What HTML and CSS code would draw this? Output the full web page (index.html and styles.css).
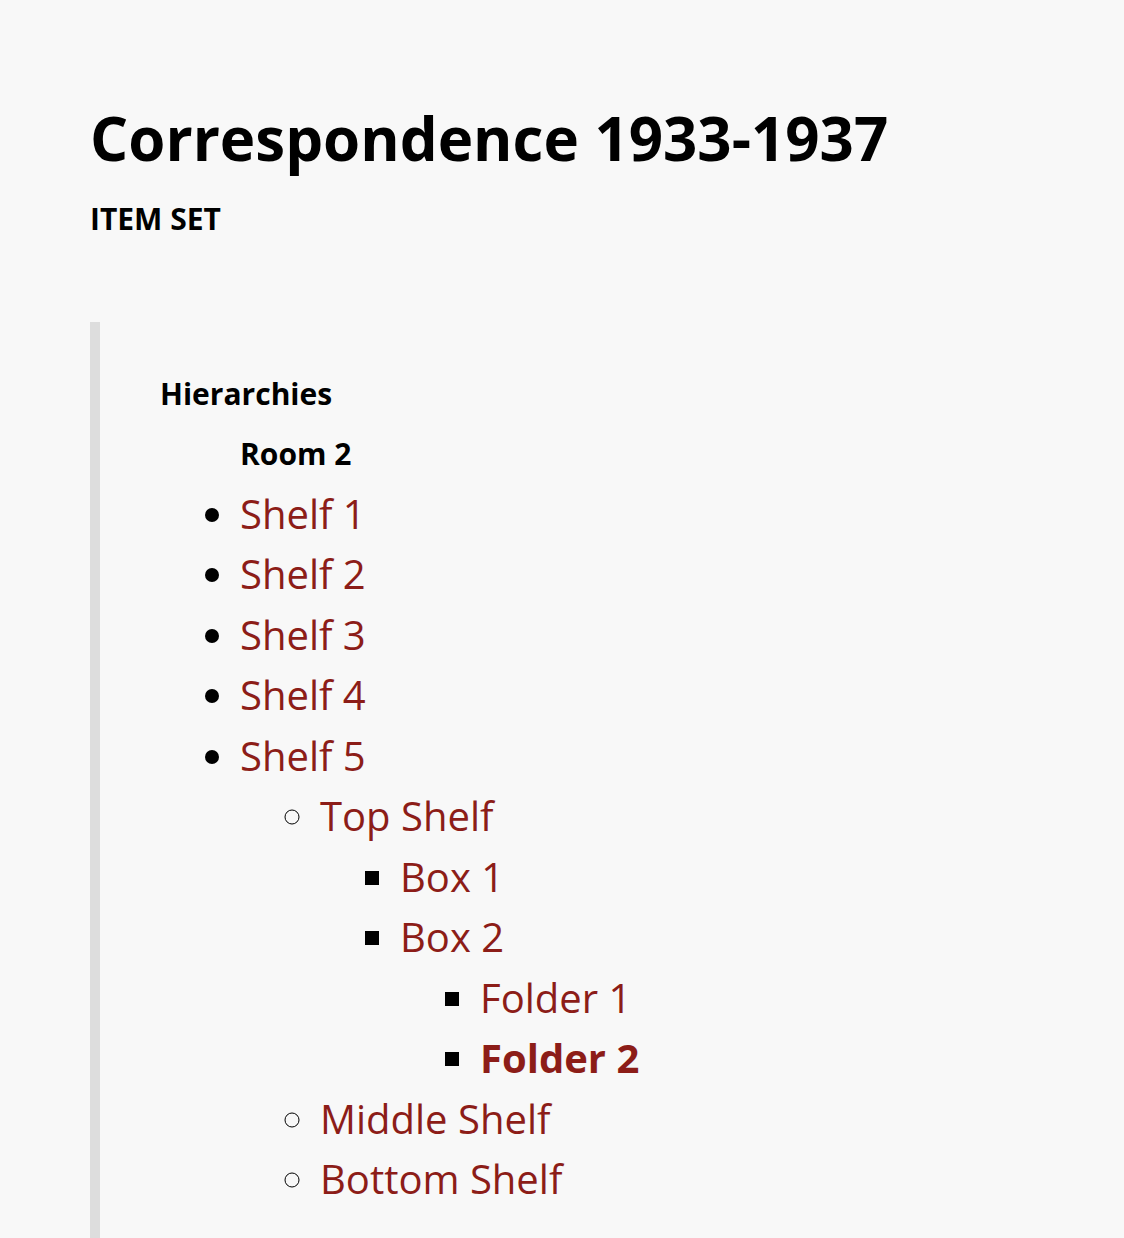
FILE: index.html
```html
<!DOCTYPE html>
<html lang="en">
<head>
<meta charset="utf-8">
<title>Correspondence 1933-1937</title>
<link rel="stylesheet" href="styles.css">
</head>
<body>
<main class="page">
  <header class="page-header">
    <h1 class="title">Correspondence 1933-1937</h1>
    <div class="resource-type">Item set</div>
  </header>
  <section class="hierarchies">
    <h2 class="hier-label">Hierarchies</h2>
    <div class="hier-body">
      <h3 class="hier-name">Room 2</h3>
      <ul class="tree level-1">
        <li><a href="#">Shelf 1</a></li>
        <li><a href="#">Shelf 2</a></li>
        <li><a href="#">Shelf 3</a></li>
        <li><a href="#">Shelf 4</a></li>
        <li><a href="#">Shelf 5</a>
          <ul class="tree level-2">
            <li><a href="#">Top Shelf</a>
              <ul class="tree level-3">
                <li><a href="#">Box 1</a></li>
                <li><a href="#">Box 2</a>
                  <ul class="tree level-4">
                    <li><a href="#">Folder 1</a></li>
                    <li><a href="#" class="current">Folder 2</a></li>
                  </ul>
                </li>
              </ul>
            </li>
            <li><a href="#">Middle Shelf</a></li>
            <li><a href="#">Bottom Shelf</a></li>
          </ul>
        </li>
      </ul>
    </div>
  </section>
</main>
</body>
</html>
```
FILE: styles.css
```css
html, body {
  margin: 0;
  padding: 0;
  background: #f8f8f8;
}
body {
  font-family: "Open Sans", "Liberation Sans", sans-serif;
  color: #000;
}
.page {
  padding: 93px 0 0 90px;
}
.title {
  margin: 0;
  font-size: 60px;
  line-height: 90px;
  font-weight: 700;
}
.resource-type {
  margin-top: 16px;
  font-size: 30px;
  line-height: 40px;
  font-weight: 700;
  text-transform: uppercase;
}
.hierarchies {
  margin-top: 83px;
  border-left: 10px solid #dddddd;
  padding: 42px 0 40px 60px;
}
.hier-label {
  margin: 0;
  font-size: 30px;
  line-height: 60px;
  font-weight: 700;
}
.hier-body {
  padding-left: 80px;
}
.hier-name {
  margin: 0;
  font-size: 30px;
  line-height: 60px;
  font-weight: 700;
}
.tree {
  margin: 0;
  padding: 0;
  font-size: 40px;
  line-height: 60.45px;
}
.tree .tree {
  padding-left: 80px;
}
.level-1 { list-style: disc; }
.level-2 { list-style: circle; }
.level-3, .level-4 { list-style: square; }
.tree a {
  color: #8c1d18;
  text-decoration: none;
}
.tree a.current {
  font-weight: 700;
}
```
